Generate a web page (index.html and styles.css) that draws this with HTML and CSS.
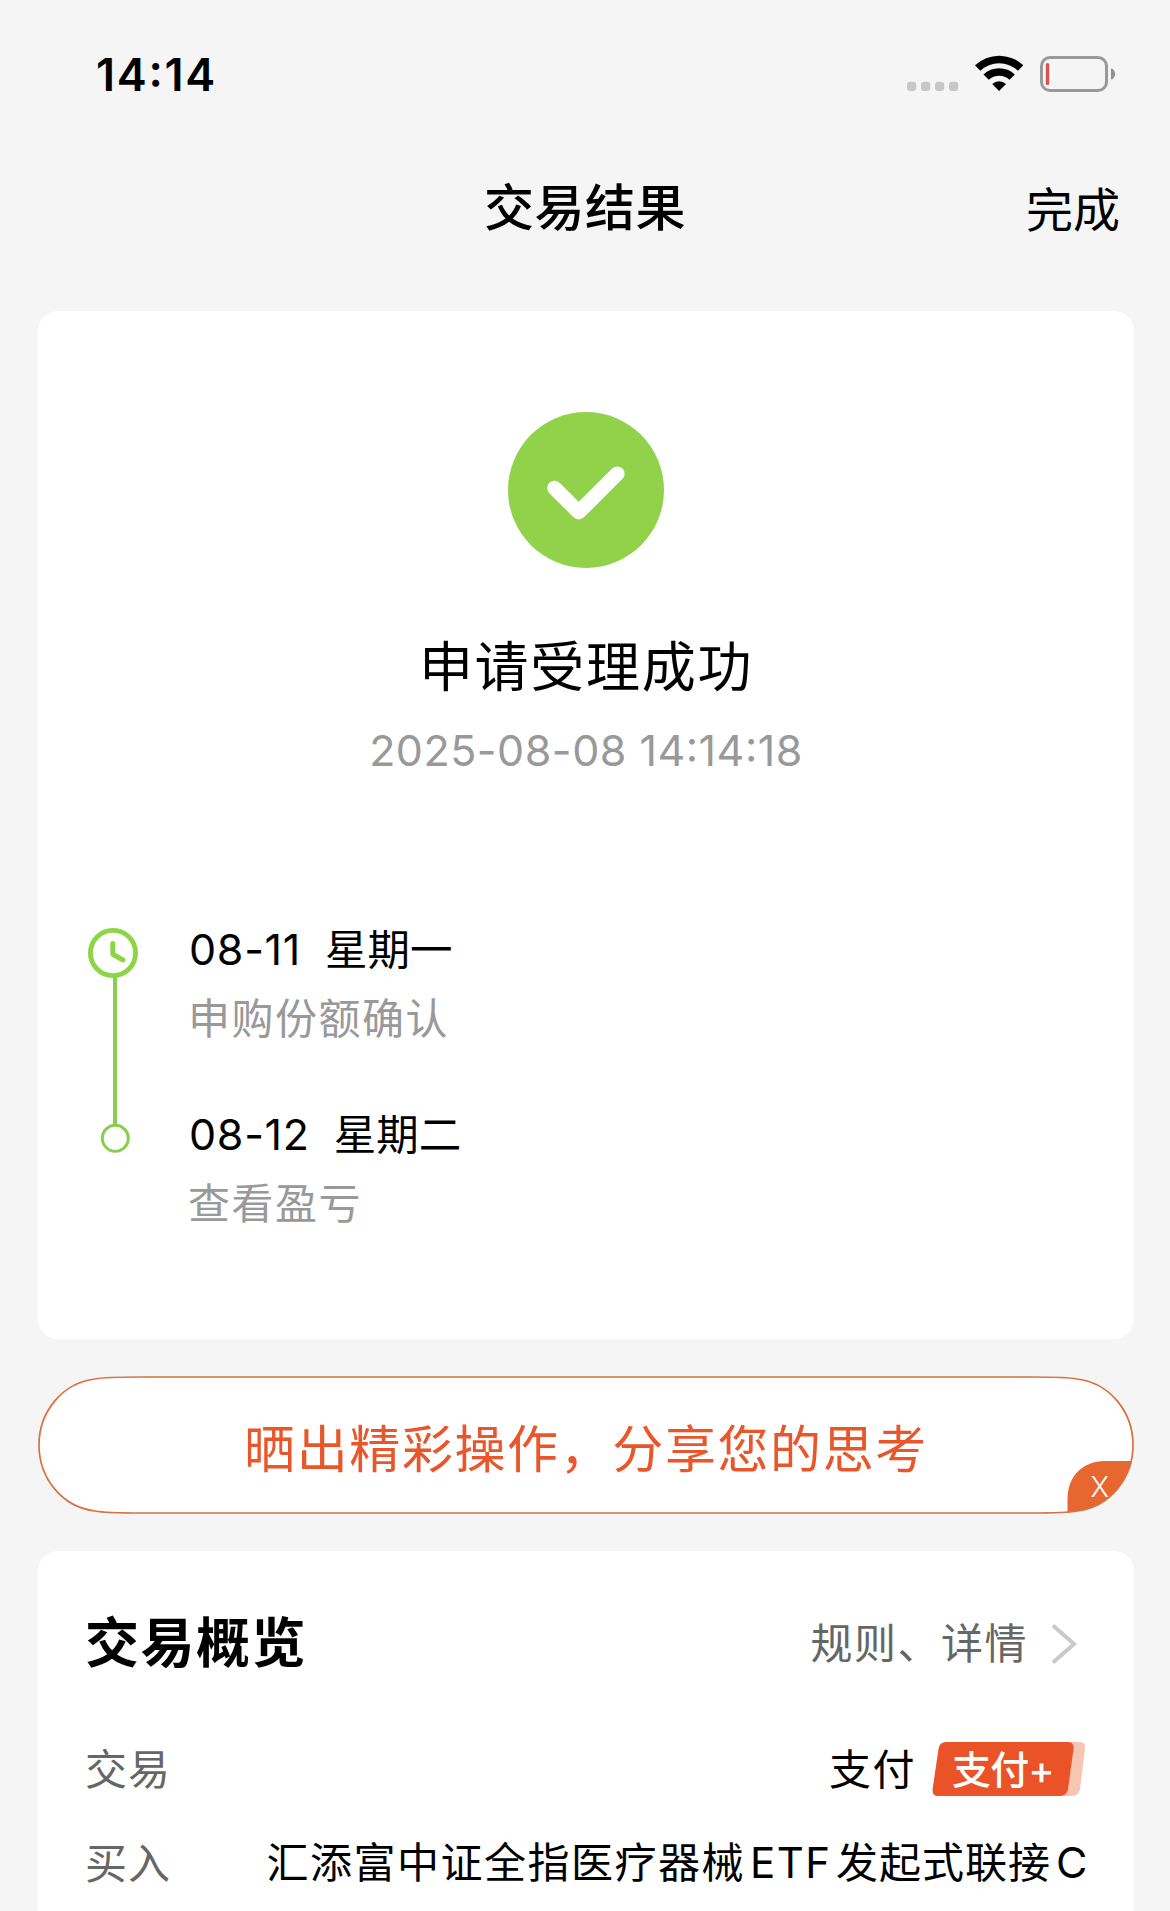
FILE: index.html
```html
<!DOCTYPE html>
<html lang="zh-CN">
<head>
<meta charset="utf-8">
<title>交易结果</title>
<link rel="stylesheet" href="styles.css">
</head>
<body>
<div class="screen">
  <div class="status">
    <span class="status-time clock-text">14:14</span>
    <svg class="status-icons" width="208" height="38" viewBox="907 55 208 38">
      <g fill="#c7c7c7">
        <rect x="907" y="81.700" width="9.200" height="9.300" rx="3"/>
        <rect x="921" y="81.700" width="9.200" height="9.300" rx="3"/>
        <rect x="935" y="81.700" width="9.200" height="9.300" rx="3"/>
        <rect x="949" y="81.700" width="9.200" height="9.300" rx="3"/>
      </g>
      <path d="M975 65.300A35 35 0 0 1 1023.300 65.300L1018 70.800A27.500 27.500 0 0 0 980.300 70.800Z"/>
      <path d="M983.500 74.500A22.500 22.500 0 0 1 1014.800 74.500L1009.500 79.800A15.500 15.500 0 0 0 988.800 79.800Z"/>
      <path d="M992.200 84A10 10 0 0 1 1006 84L999.100 91Z"/>
      <rect x="1041.500" y="57.500" width="65" height="33" rx="8.500" fill="none" stroke="#999" stroke-width="3"/>
      <rect x="1045.800" y="63" width="3.400" height="22" rx="1.500" fill="#d9534c"/>
      <path d="M1111 68.200Q1115 70 1115 74T1111 79.800Z" fill="#8f8f8f"/>
    </svg>
  </div>
  <header class="nav">
    <h1 class="nav-title">交易结果</h1>
    <span class="nav-done">完成</span>
  </header>

  <main class="content">
    <section class="card result">
      <svg class="result-icon" width="156" height="156" viewBox="0 0 156 156">
        <circle cx="78" cy="78" r="78" fill="#92d14a"/>
        <path d="M46.500 76L70.700 100.200L109.300 61.700" fill="none" stroke="#fff" stroke-width="14.600" stroke-linecap="round" stroke-linejoin="round"/>
      </svg>
      <h2 class="result-title">申请受理成功</h2>
      <p class="result-time">2025-08-08 <span class="clock-text">14:14:18</span></p>
      <div class="timeline">
        <svg class="rail" width="52" height="230" viewBox="86 926 52 230" fill="none">
          <path d="M115 976V1126" stroke="#86cd50" stroke-width="4"/>
          <circle cx="113" cy="953" r="22.600" stroke="#8cd544" stroke-width="4.800"/>
          <path d="M112.800 943.500V954.300L123 960" stroke="#8cd544" stroke-width="5" stroke-linecap="round" stroke-linejoin="round"/>
          <circle cx="115.300" cy="1138.300" r="13" stroke="#86cd50" stroke-width="3"/>
        </svg>
        <ol class="steps">
          <li class="step">
            <p class="step-date"><span class="day">08-11</span><span class="weekday">星期一</span></p>
            <p class="step-text">申购份额确认</p>
          </li>
          <li class="step">
            <p class="step-date"><span class="day">08-12</span><span class="weekday">星期二</span></p>
            <p class="step-text">查看盈亏</p>
          </li>
        </ol>
      </div>
    </section>

    <section class="share">
      <svg class="share-shape" width="1096" height="138" viewBox="0 0 1096 138">
        <defs>
          <path id="pill" d="M1 69C1 36 24 7 57 3C67 1 84 1 104 1H992C1012 1 1029 1 1039 3C1072 7 1095 36 1095 69S1072 131 1039 135C1029 137 1012 137 992 137H104C84 137 67 137 57 135C24 131 1 102 1 69Z"/>
          <clipPath id="pill-clip"><use href="#pill"/></clipPath>
        </defs>
        <use href="#pill" fill="#fff"/>
        <path d="M1029.500 138V123C1029.500 100 1045 85 1067 85H1096V138Z" fill="#e86630" clip-path="url(#pill-clip)"/>
        <use href="#pill" fill="none" stroke="#d9703f" stroke-width="1.700"/>
      </svg>
      <span class="share-text">晒出精彩操作，分享您的思考</span>
      <span class="share-close">X</span>
    </section>

    <section class="card overview">
      <div class="row overview-head">
        <h2 class="overview-title">交易概览</h2>
        <span class="more">规则、详情
          <svg class="chevron" width="26" height="42" viewBox="0 0 26 42"><path d="M2 2.500L23 21L2 39.500" fill="none" stroke="#c9c9c9" stroke-width="4"/></svg>
        </span>
      </div>
      <div class="row row-pay">
        <span class="label">交易</span>
        <span class="value pay">支付
          <span class="tag">
            <svg class="tag-shape" width="154" height="54" viewBox="0 0 154 54">
              <path d="M20 0H147Q154 0 153 7L148 47Q147 54 140 54H20Z" fill="#f7c6b3"/>
              <path d="M14 0H135Q142.500 0 141.500 7L136 47Q135 54 128 54H6Q0 54 .6 47L6.500 7Q7.500 0 14 0Z" fill="#ea5228"/>
            </svg>
            <span class="tag-text">支付+</span>
          </span>
        </span>
      </div>
      <div class="row row-buy">
        <span class="label">买入</span>
        <span class="value fund">汇添富中证全指医疗器械<span class="latin">ETF</span><span class="fund-tail">发起式联接</span><span class="latin-end">C</span></span>
      </div>
    </section>
  </main>
</div>
</body>
</html>
```
FILE: styles.css
```css
* { box-sizing: border-box; }
body, h1, h2, p, ol { margin: 0; padding: 0; font-weight: 400; }
ol { list-style: none; }
svg { display: block; }
body {
  background: #f5f5f5;
  color: #000;
  font-family: Inter, "Noto Sans CJK SC", sans-serif;
}
.screen { width: 1170px; height: 1911px; overflow: hidden; }
.clock-text { font-feature-settings: "case" 1; }

.status {
  display: flex;
  justify-content: space-between;
  align-items: center;
  height: 149px;
  padding: 0 55px 0 96px;
}
.status-time { font-size: 45px; font-weight: 600; line-height: 50px; letter-spacing: 1.7px; }
.status-icons { margin-top: -2px; }

.nav {
  display: grid;
  grid-template-columns: 1fr auto 1fr;
  align-items: center;
  height: 112px;
  padding: 5px 50px 0;
  margin-bottom: 50px;
}
.nav-title { grid-column: 2; font-size: 50px; font-weight: 500; line-height: 60px; letter-spacing: .5px; }
.nav-done { justify-self: end; font-size: 47px; line-height: 56px; padding-top: 4px; }

.content { padding: 0 36px 0 38px; }
.card { background: #fff; border-radius: 20px; }

.result {
  display: flex;
  flex-direction: column;
  align-items: center;
  height: 1028px;
  padding-top: 101px;
}
.result-title { margin-top: 70px; font-size: 54px; line-height: 60px; letter-spacing: 1.7px; }
.result-time { margin-top: 27px; color: #999; font-size: 43px; line-height: 50px; letter-spacing: .5px; }
.timeline {
  align-self: stretch;
  display: flex;
  gap: 50px;
  margin-top: 149px;
  padding-left: 48px;
}
.rail { margin-top: 2px; }
.step { height: 185px; }
.step-date { display: flex; font-size: 43px; line-height: 50px; }
.day { margin: 0 24px 0 1px; letter-spacing: .7px; }
.weekday { padding-top: 2px; font-size: 42.5px; line-height: 48px; }
.step-text { margin-top: 20px; color: #999; font-size: 42px; line-height: 50px; letter-spacing: 1.5px; }

.share {
  position: relative;
  display: flex;
  justify-content: center;
  align-items: center;
  height: 138px;
  margin: 37px 0;
}
.share-shape { position: absolute; inset: 0; }
.share-text { position: relative; padding-top: 10px; color: #e8562a; font-size: 51px; line-height: 60px; letter-spacing: 1.6px; }
.share-close { position: absolute; right: 25px; bottom: 11px; color: #fff; font-size: 28px; font-weight: 300; line-height: 32px; }

.overview { height: 400px; padding: 63px 48px 0 47px; }
.row { display: flex; justify-content: space-between; align-items: center; }
.overview-head { height: 60px; }
.overview-title { font-size: 54px; font-weight: 700; line-height: 60px; letter-spacing: 1.5px; }
.more { display: flex; align-items: center; gap: 23px; padding-right: 9px; color: #666; font-size: 42px; line-height: 50px; letter-spacing: 1.5px; }
.label { padding-top: 2px; color: #666; font-size: 42px; letter-spacing: 1px; }
.value { font-size: 42px; letter-spacing: 1.5px; }
.row-pay { height: 56px; margin-top: 67px; line-height: 54px; }
.pay { display: flex; gap: 16px; padding-top: 2px; }
.tag { display: grid; width: 154px; height: 54px; margin-top: -1px; }
.tag-shape, .tag-text { grid-area: 1 / 1; }
.tag-text { padding: 1px 0 0 20px; color: #fff; font-size: 39px; font-weight: 500; letter-spacing: -.8px; }
.row-buy { height: 56px; margin-top: 38px; line-height: 54px; }
.fund { margin: -2px -3px 0 0; }
.latin { margin: 0 4.5px 0 5px; }
.fund-tail { letter-spacing: 1px; }
.latin-end { margin-left: 5px; font-size: 43px; }
```
